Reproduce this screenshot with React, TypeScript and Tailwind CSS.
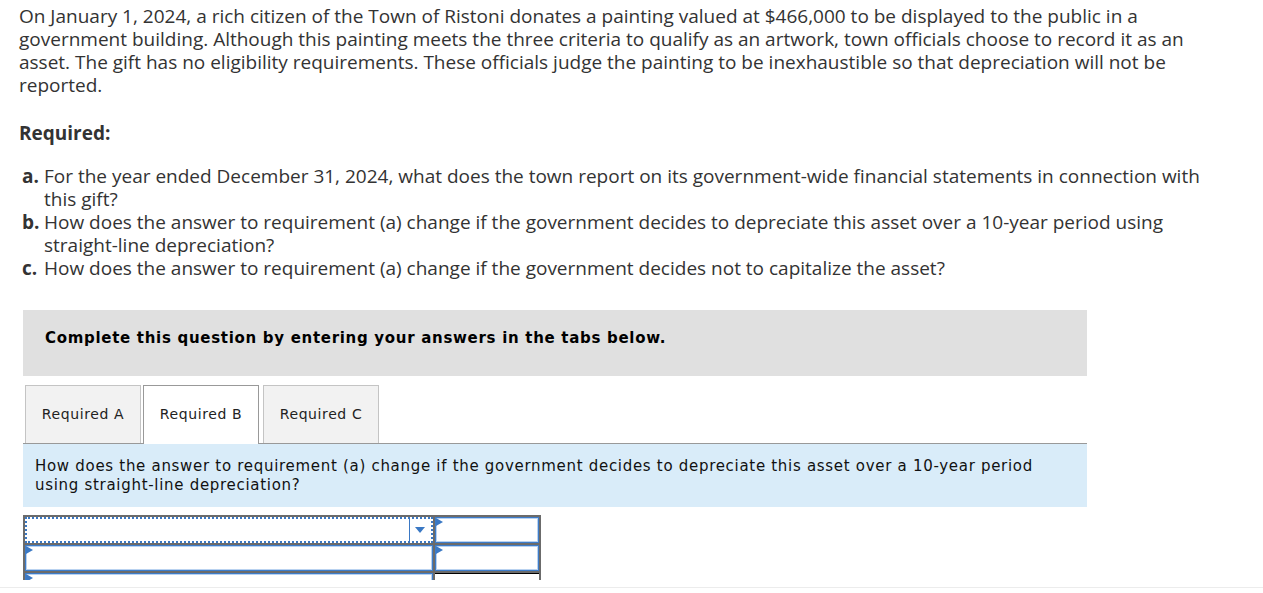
import React from "react";

const Flag: React.FC = () => (
  <span className="absolute left-0 top-0 w-0 h-0 border-y-[4px] border-y-transparent border-l-[7px] border-l-[#3a78c4]" />
);

const InputCell: React.FC<{ flag?: boolean }> = ({ flag = true }) => (
  <div className="relative bg-white border border-[#3d7cc9] shadow-[inset_0_0_0_1px_#b9d2f0]">
    {flag && <Flag />}
  </div>
);

const tabs = ["Required A", "Required B", "Required C"];

export default function App() {
  const active = 1;

  return (
    <div className="min-h-[593px] bg-white text-[#333] font-['Open_Sans','Liberation_Sans',sans-serif]">
      <div className="pl-[19px] pt-[5px]">
        <p className="w-[1180px] text-[19px] leading-[23px]">
          On January 1, 2024, a rich citizen of the Town of Ristoni donates a painting valued at $466,000 to be
          displayed to the public in a government building. Although this painting meets the three criteria to
          qualify as an artwork, town officials choose to record it as an asset. The gift has no eligibility
          requirements. These officials judge the painting to be inexhaustible so that depreciation will not be
          reported.
        </p>

        <p className="mt-[25px] text-[19px] leading-[23px] font-bold">Required:</p>

        <ol className="mt-[20px] w-[1205px] text-[19px] leading-[23px]">
          <li className="flex">
            <span className="w-[25px] shrink-0 pl-[3px] font-bold">a.</span>
            <span>
              For the year ended December 31, 2024, what does the town report on its government-wide financial
              statements in connection with this gift?
            </span>
          </li>
          <li className="flex">
            <span className="w-[25px] shrink-0 pl-[3px] font-bold">b.</span>
            <span>
              How does the answer to requirement (a) change if the government decides to depreciate this asset
              over a 10-year period using straight-line depreciation?
            </span>
          </li>
          <li className="flex">
            <span className="w-[25px] shrink-0 pl-[3px] font-bold">c.</span>
            <span>
              How does the answer to requirement (a) change if the government decides not to capitalize the asset?
            </span>
          </li>
        </ol>
      </div>

      <div className="ml-[23px] w-[1064px] font-['DejaVu_Sans','Verdana',sans-serif]">
        <div className="mt-[30px] h-[66px] bg-[#e0e0e0] pl-[22px] pt-[17px] text-[15px] font-bold tracking-[0.7px] text-black">
          Complete this question by entering your answers in the tabs below.
        </div>

        <div className="mt-[9px] flex items-end border-b border-[#999] pl-[2px]">
          {tabs.map((t, i) => (
            <div
              key={t}
              className={
                i === active
                  ? "mr-[4px] -mb-px flex h-[59px] w-[116px] items-center justify-center border border-b-0 border-[#999] bg-white pb-px text-[14px] tracking-[0.6px] text-[#222]"
                  : "mr-[2px] flex h-[58px] w-[116px] items-center justify-center border border-b-0 border-[#c4c4c4] bg-[#f2f2f2] text-[14px] tracking-[0.6px] text-[#222]"
              }
            >
              {t}
            </div>
          ))}
        </div>

        <div className="h-[63px] bg-[#d9ecf9] pl-[12px] pr-[40px] pt-[13px] text-[15px] leading-[19px] tracking-[0.7px] text-[#111]">
          How does the answer to requirement (a) change if the government decides to depreciate this asset over a
          10-year period using straight-line depreciation?
        </div>

        <div className="mt-[8px] h-[65px] w-[518px] overflow-hidden">
          <div className="grid grid-cols-[408px_104px] grid-rows-[26px_26px_26px] gap-[2px] bg-[#6b6b6b] p-[2px]">
            <div className="relative border-2 border-dotted border-[#3a78c4] bg-white">
              <span className="absolute right-[21px] top-0 h-[23px] w-px bg-[#3a78c4]" />
              <span className="absolute right-[6px] top-[8px] h-0 w-0 border-x-[5px] border-x-transparent border-t-[6px] border-t-[#3a78c4]" />
            </div>
            <InputCell />
            <InputCell />
            <InputCell />
            <InputCell />
            <div className="border-t border-black bg-white" />
          </div>
        </div>
      </div>

      <div className="mt-[7px] h-[6px] border-t border-[#ececec]" />
    </div>
  );
}
